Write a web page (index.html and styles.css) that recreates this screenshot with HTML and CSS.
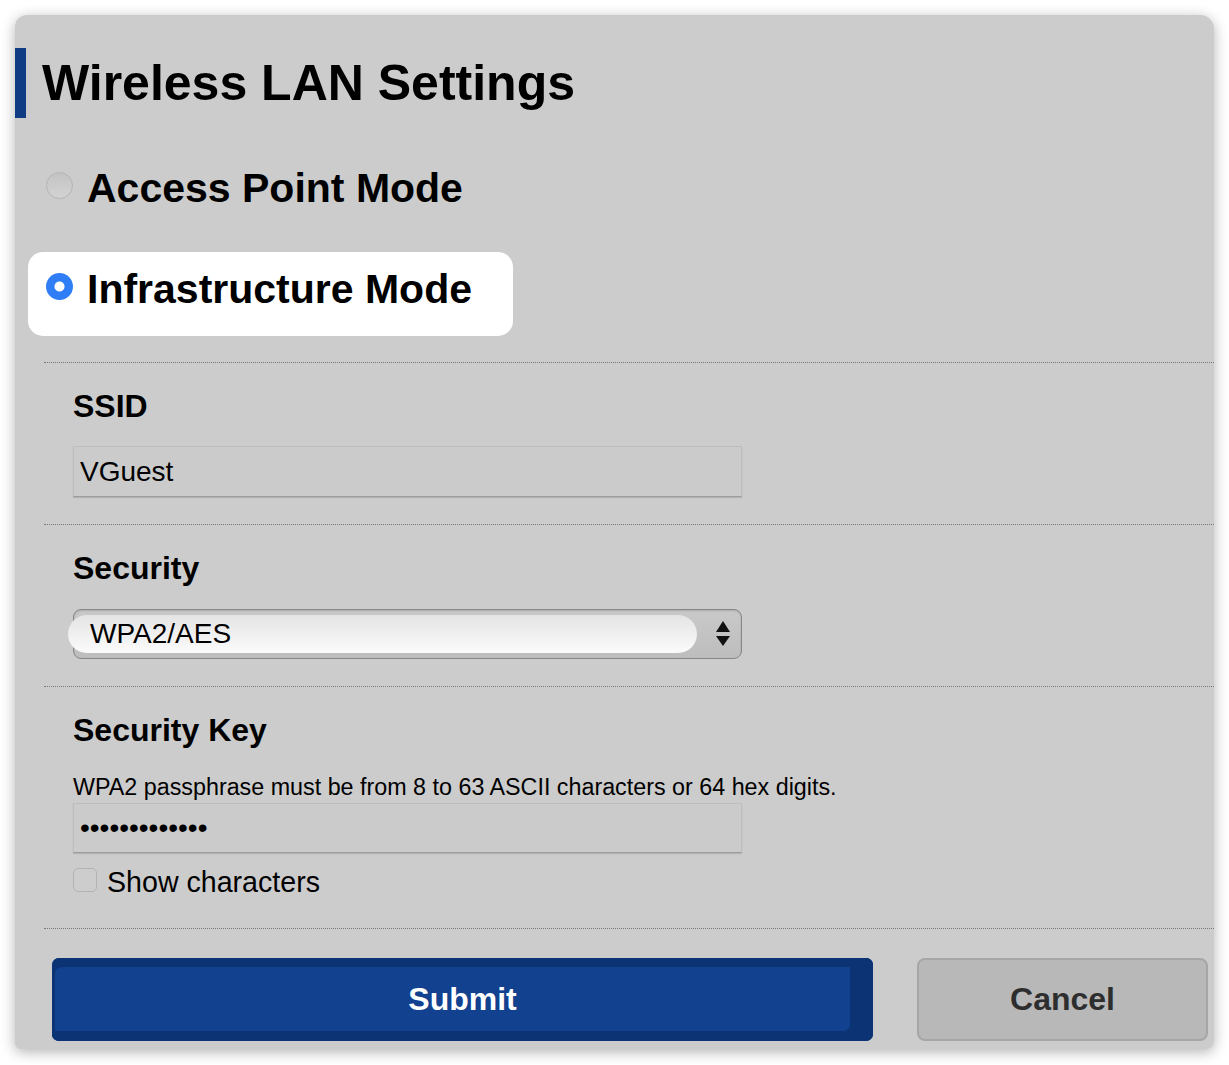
FILE: index.html
```html
<!DOCTYPE html>
<html lang="en">
<head>
    <meta charset="UTF-8">
    <meta name="viewport" content="width=device-width, initial-scale=1.0">
    <title>Wireless LAN Settings</title>
    <link rel="stylesheet" href="styles.css">
</head>
<body>
    <div class="settings-panel">
        <h1 class="page-title">Wireless LAN Settings</h1>

        <div class="mode-list">
            <label class="mode-option">
                <input type="radio" name="mode" value="ap">
                <span>Access Point Mode</span>
            </label>
            <label class="mode-option is-selected">
                <input type="radio" name="mode" value="infra" checked>
                <span>Infrastructure Mode</span>
            </label>
        </div>

        <div class="field-section">
            <h2 class="field-label">SSID</h2>
            <input type="text" class="text-field" value="VGuest">
        </div>

        <div class="field-section">
            <h2 class="field-label">Security</h2>
            <div class="select-box">
                <span class="select-value">WPA2/AES</span>
                <svg class="select-arrows" width="14" height="26" viewBox="0 0 14 26">
                    <polygon points="7,0 14,11 0,11" fill="#111"/>
                    <polygon points="0,15 14,15 7,25" fill="#111"/>
                </svg>
            </div>
        </div>

        <div class="field-section key-section">
            <h2 class="field-label">Security Key</h2>
            <p class="field-help">WPA2 passphrase must be from 8 to 63 ASCII characters or 64 hex digits.</p>
            <input type="password" class="text-field password-field" value="guestpass2024">
            <label class="check-row">
                <input type="checkbox" onchange="toggleKey(this)">
                <span>Show characters</span>
            </label>
        </div>

        <div class="form-actions">
            <button type="button" class="btn btn-submit">Submit</button>
            <button type="button" class="btn btn-cancel">Cancel</button>
        </div>
    </div>

    <script>
        function toggleKey(box) {
            document.querySelector('.password-field').type = box.checked ? 'text' : 'password';
        }
    </script>
</body>
</html>
```

FILE: styles.css
```css
body {
    margin: 0;
    background: #fff;
    font-family: "Liberation Sans", Arial, sans-serif;
    color: #000;
}

.settings-panel {
    width: 1199px;
    margin: 15px;
    padding: 33px 0 8px;
    background: #cccccc;
    border-radius: 12px 14px 8px 6px;
    box-shadow: 0 3px 14px rgba(0, 0, 0, 0.3);
    box-sizing: border-box;
}

.page-title {
    margin: 0;
    height: 70px;
    line-height: 70px;
    padding-left: 16px;
    border-left: 11px solid #0f3c82;
    font-size: 50px;
    font-weight: bold;
}

/* mode radios */
.mode-list {
    display: flex;
    flex-direction: column;
    align-items: flex-start;
    gap: 17px;
    margin: 33px 0 0 13px;
}

.mode-option {
    display: flex;
    align-items: flex-start;
    gap: 14px;
    padding: 20px 41px 29px 18px;
    font-size: 41px;
    font-weight: bold;
    line-height: 35px;
    border-radius: 15px;
}

.mode-option.is-selected {
    background: #fff;
}

.mode-option input {
    appearance: none;
    width: 27px;
    height: 27px;
    margin: 1px 0 0;
    border-radius: 50%;
    border: 1px solid #b4b4b4;
    background: linear-gradient(#c3c3c3, #d3d3d3);
    box-sizing: border-box;
    flex-shrink: 0;
}

.mode-option input:checked {
    border: none;
    background: radial-gradient(circle, #fff 0 4.5px, #2f7ef5 5.5px);
}

/* field blocks */
.field-section {
    margin: 26px 0 0 29px;
    padding: 25px 0 27px 29px;
    border-top: 1px dotted #777;
}

.field-section + .field-section {
    margin-top: 0;
}

.field-label {
    margin: 0;
    font-size: 32px;
    line-height: 36px;
    font-weight: bold;
}

.text-field {
    display: block;
    width: 669px;
    height: 51px;
    margin-top: 22px;
    padding: 0 6px;
    box-sizing: border-box;
    border: 1px solid #bdbdbd;
    border-bottom-color: #9c9c9c;
    box-shadow: 0 1px 1px rgba(0, 0, 0, 0.12);
    background: #cbcbcb;
    font-family: inherit;
    font-size: 28px;
    color: #000;
    outline: none;
}

.select-box {
    display: flex;
    align-items: center;
    width: 669px;
    height: 50px;
    margin-top: 23px;
    box-sizing: border-box;
    border: 1.5px solid #878787;
    border-radius: 8px;
    background: linear-gradient(#c9c9c9, #bdbdbd);
    box-shadow: inset 0 1px 2px rgba(0, 0, 0, 0.15);
}

.select-value {
    display: flex;
    align-items: center;
    width: 629px;
    height: 38px;
    margin-left: -6px;
    padding-left: 22px;
    box-sizing: border-box;
    border-radius: 19px;
    background: linear-gradient(#e4e4e4, #fbfbfb);
    font-size: 28px;
}

.select-arrows {
    margin: 0 11px 0 auto;
}

.key-section {
    padding-bottom: 31px;
}

.field-help {
    margin: 26px 0 0;
    font-size: 23.3px;
    line-height: 26px;
}

.password-field {
    height: 50px;
    margin-top: 3px;
    font-size: 28px;
}

.check-row {
    display: flex;
    align-items: flex-start;
    gap: 10px;
    margin-top: 14px;
    font-size: 28.6px;
    line-height: 30px;
}

.check-row input {
    appearance: none;
    width: 24px;
    height: 24px;
    margin: 1px 0 0;
    border: 1px solid #b2b2b2;
    border-radius: 5px;
    background: #cdcdcd;
    box-sizing: border-box;
}

/* buttons */
.form-actions {
    display: flex;
    gap: 44px;
    margin-left: 29px;
    padding: 29px 6px 0 8px;
    border-top: 1px dotted #777;
}

.btn {
    height: 83px;
    font-family: inherit;
    font-size: 32px;
    font-weight: bold;
    cursor: pointer;
}

.btn-submit {
    width: 821px;
    border: none;
    border-radius: 7px;
    background: #11418f;
    color: #fff;
    box-shadow: inset 3px 9px 0 #0c3474, inset -23px -10px 0 #0c3474;
}

.btn-cancel {
    width: 291px;
    border: 2px solid #a6a6a6;
    border-radius: 8px;
    background: #b8b8b8;
    color: #2e2e2e;
}
```
